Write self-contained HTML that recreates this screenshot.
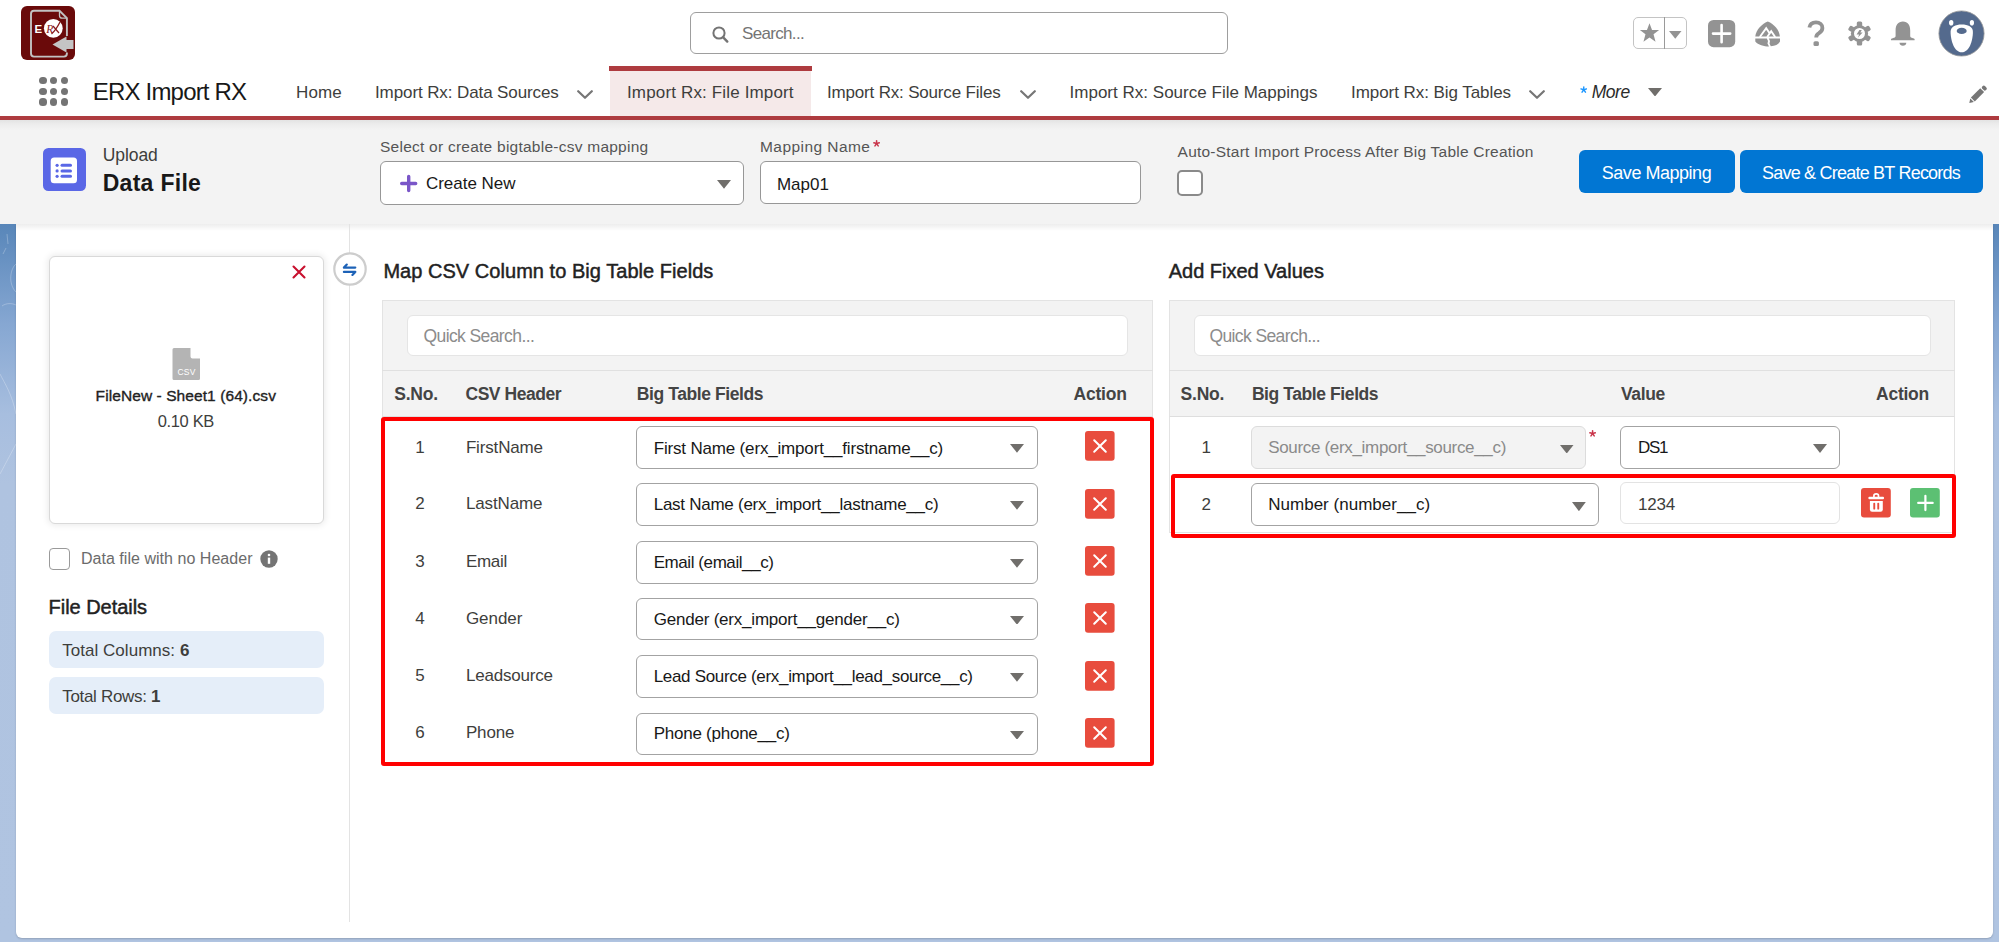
<!DOCTYPE html>
<html><head><meta charset="utf-8"><title>ERX Import RX</title>
<style>
html,body{margin:0;padding:0;}
body{width:1999px;height:942px;overflow:hidden;position:relative;background:#fff;font-family:"Liberation Sans",sans-serif;}
.a{position:absolute;}
.t{position:absolute;white-space:nowrap;line-height:1;}
.t b{font-weight:700;}
</style></head><body>
<div class="a" style="left:0px;top:224px;width:1999px;height:718px;background:linear-gradient(180deg,#5886b9 0px,#86a7d2 100px,#a7bedf 190px,#afc3e0 260px,#b0c4e1 100%);"></div>
<svg class="a" style="left:0;top:224px" width="17" height="400" viewBox="0 0 17 400"><g fill="none" stroke="rgba(255,255,255,0.25)" stroke-width="1"><path d="M7 10L8 20"/><path d="M3 30L6 24"/><path d="M16 40C10 45 8 60 16 68"/><path d="M2 82C6 79 12 79 16 81"/><path d="M0 150C5 160 12 170 16 190"/><path d="M0 250L16 220"/></g></svg>
<div class="a" style="left:16.4px;top:224px;width:1976.8999999999999px;height:714.3px;background:#fff;border-radius:0 0 6px 6px;box-shadow:0 1px 2px rgba(0,0,0,0.18);"></div>
<div class="a" style="left:0px;top:0px;width:1999px;height:116px;background:#fff;"></div>
<div class="a" style="left:0px;top:116px;width:1999px;height:4px;background:#ae3b3f;"></div>
<div class="a" style="left:0px;top:120px;width:1999px;height:104px;background:linear-gradient(180deg,#e3e3e3 0px,#ececec 4px,#f3f3f3 10px,#f3f3f3 100%);"></div>
<div class="a" style="left:16.4px;top:224px;width:1976.8999999999999px;height:7px;background:linear-gradient(180deg,rgba(0,0,0,0.07),rgba(0,0,0,0));"></div>
<svg class="a" style="left:21px;top:6px" width="54" height="54" viewBox="0 0 54 54">
<rect x="0" y="0" width="54" height="54" rx="6" fill="#6a0a0a"/>
<path d="M45.9 30V12.2L38.5 4.8H13Q10 4.8 10 7.8V47.6Q10 50.6 13 50.6H42.9Q45.9 50.6 45.9 47.6V46.5" fill="none" stroke="#c2c2c2" stroke-width="1.9"/>
<path d="M38.5 4.8V9.5Q38.5 12.2 41.2 12.2H45.9" fill="none" stroke="#c2c2c2" stroke-width="1.3"/>
<path d="M31.5 38.6L45.5 30.6V34H52.5V43H45.5V46.6Z" fill="#c4c4c4"/>
<circle cx="32.3" cy="22.3" r="9.4" fill="#fff"/>
<text x="13.6" y="26.6" font-family="Liberation Sans" font-weight="700" font-size="11.5" fill="#fff">E</text>
<text x="25.2" y="26.5" font-family="Liberation Serif" font-style="italic" font-size="11.5" fill="#8a1a1a">R</text>
<path d="M30.5 28Q35 24 39 16" fill="none" stroke="#8a1a1a" stroke-width="1.3"/>
<path d="M32 20L38 27" fill="none" stroke="#8a1a1a" stroke-width="1.2"/>
</svg>
<div class="a" style="left:689.5px;top:12px;width:538.5px;height:41.5px;border:1.5px solid #9e9e9e;border-radius:6px;box-sizing:border-box;background:#fff;"></div>
<svg class="a" style="left:711px;top:25px" width="18" height="19" viewBox="0 0 18 19"><circle cx="8" cy="8" r="5.6" fill="none" stroke="#747474" stroke-width="2"/><path d="M12.2 12.4L16.3 16.6" stroke="#747474" stroke-width="2.4" stroke-linecap="round"/></svg>
<div class="a" style="left:1633px;top:16.7px;width:54px;height:32.8px;border:1.6px solid #c4c4c4;border-radius:5px;box-sizing:border-box;"></div>
<div class="a" style="left:1664px;top:17px;width:1.2999999999999545px;height:32px;background:#9a9a9a;"></div>
<svg class="a" style="left:1639px;top:22px" width="21" height="21" viewBox="0 0 24 24"><path d="M12 1.5L14.9 9.2H23L16.6 14.1L18.9 22.5L12 17.6L5.1 22.5L7.4 14.1L1 9.2H9.1Z" fill="#939393"/></svg>
<svg class="a" style="left:1669px;top:31px" width="12.5" height="7.799999999999997" viewBox="0 0 12.5 7.799999999999997"><path d="M0 0H12.5L6.25 7.799999999999997Z" fill="#939393"/></svg>
<svg class="a" style="left:1708px;top:19.5px" width="28" height="28" viewBox="0 0 28 28"><rect x="0" y="0" width="27.2" height="27.2" rx="5.5" fill="#939393"/><path d="M13.6 5V22.2M5 13.6H22.2" stroke="#fff" stroke-width="2.6" stroke-linecap="round"/></svg>
<svg class="a" style="left:1755px;top:20.5px" width="26" height="26" viewBox="0 0 26 26">
<path d="M12.8 0.5C19 3 24.5 9 24.8 15.5H0.3C1 9 6.5 3 12.8 0.5Z" fill="#939393"/>
<path d="M0.3 17.5H11.8L13 20L12.5 22.5L14 25.5C9 25.5 3 24 0.3 20.5Z" fill="#939393"/>
<path d="M25 17.5H13.8L15 20L14.5 22.5L15.8 25.3C20 25 23.5 23.5 25 20.5Z" fill="#939393"/>
<path d="M4.8 16L11.2 7.2L14.6 12.2M12.2 16L16.2 10.2L20.2 16" fill="none" stroke="#fff" stroke-width="1.9"/>
</svg>
<svg class="a" style="left:1806px;top:19.5px" width="20" height="27" viewBox="0 0 20 27"><path d="M3.4 7.6C3.9 4 6.6 2.4 10 2.4C13.8 2.4 16.4 4.8 16.4 8C16.4 10.6 14.8 12 13 13.2C11 14.4 10.2 15.4 10.2 17.6" fill="none" stroke="#939393" stroke-width="3.8" stroke-linecap="butt"/><rect x="7.5" y="21.2" width="5.4" height="4.9" rx="1.6" fill="#939393"/></svg>
<svg class="a" style="left:1846.5px;top:20.5px" width="25" height="25" viewBox="0 0 25 25">
<g fill="#939393"><circle cx="12.5" cy="12.5" r="8.6"/>
<rect x="9.8" y="0.5" width="5.4" height="5" rx="1.5"/><rect x="9.8" y="19.5" width="5.4" height="5" rx="1.5"/>
<rect x="9.8" y="0.5" width="5.4" height="5" rx="1.5" transform="rotate(60 12.5 12.5)"/><rect x="9.8" y="0.5" width="5.4" height="5" rx="1.5" transform="rotate(120 12.5 12.5)"/>
<rect x="9.8" y="0.5" width="5.4" height="5" rx="1.5" transform="rotate(240 12.5 12.5)"/><rect x="9.8" y="0.5" width="5.4" height="5" rx="1.5" transform="rotate(300 12.5 12.5)"/></g>
<circle cx="12.5" cy="12.5" r="5.5" fill="#fff"/>
<path d="M12.4 8.9H14.8L13.3 11.5H15.6L11 16.4L12.1 13.4H9.6Z" fill="#939393"/>
</svg>
<svg class="a" style="left:1889.5px;top:20.5px" width="26" height="26" viewBox="0 0 26 26"><path d="M12.9 0.5C17.8 0.5 20.2 4.2 20.2 9.5V15C20.2 16.2 21.2 16.8 23 17.2C24.5 17.5 25 18.5 24.5 19.2H1.1C0.6 18.5 1.2 17.5 2.7 17.2C4.5 16.8 5.6 16.2 5.6 15V9.5C5.6 4.2 8 0.5 12.9 0.5Z" fill="#939393"/><path d="M9.5 21.8H16.3C16.3 23.5 14.8 24.8 12.9 24.8C11 24.8 9.5 23.5 9.5 21.8Z" fill="#939393"/></svg>
<svg class="a" style="left:1938px;top:10px" width="47" height="47" viewBox="0 0 47 47">
<circle cx="23.5" cy="23.5" r="22.6" fill="#546a8d" stroke="#9a9a9a" stroke-width="0.8"/>
<ellipse cx="13.2" cy="12.7" rx="2.2" ry="2.8" fill="#fff"/><ellipse cx="33.9" cy="12.7" rx="2.1" ry="2.8" fill="#fff"/>
<path d="M23.7 14.6C30 14.6 34.9 16.5 34.9 22C34.9 30 31.5 42.3 23.7 42.3C16 42.3 12.6 30 12.6 22C12.6 16.5 17.5 14.6 23.7 14.6Z" fill="#fff"/>
<ellipse cx="23.7" cy="20.9" rx="5" ry="3.1" fill="#546a8d"/>
</svg>
<div class="a" style="left:39.4px;top:76.7px;width:7.2px;height:7.2px;border-radius:50%;background:#747474;"></div>
<div class="a" style="left:50.199999999999996px;top:76.7px;width:7.2px;height:7.2px;border-radius:50%;background:#747474;"></div>
<div class="a" style="left:60.800000000000004px;top:76.7px;width:7.2px;height:7.2px;border-radius:50%;background:#747474;"></div>
<div class="a" style="left:39.4px;top:87.7px;width:7.2px;height:7.2px;border-radius:50%;background:#747474;"></div>
<div class="a" style="left:50.199999999999996px;top:87.7px;width:7.2px;height:7.2px;border-radius:50%;background:#747474;"></div>
<div class="a" style="left:60.800000000000004px;top:87.7px;width:7.2px;height:7.2px;border-radius:50%;background:#747474;"></div>
<div class="a" style="left:39.4px;top:98.4px;width:7.2px;height:7.2px;border-radius:50%;background:#747474;"></div>
<div class="a" style="left:50.199999999999996px;top:98.4px;width:7.2px;height:7.2px;border-radius:50%;background:#747474;"></div>
<div class="a" style="left:60.800000000000004px;top:98.4px;width:7.2px;height:7.2px;border-radius:50%;background:#747474;"></div>
<div class="a" style="left:610px;top:70px;width:201px;height:46px;background:#f5e9e9;"></div>
<div class="a" style="left:609px;top:66px;width:202.5px;height:4.5px;background:#ae3b3f;"></div>
<svg class="a" style="left:577px;top:89px" width="16" height="10" viewBox="0 0 16 10"><path d="M1.2 2.2L8.0 8.8L14.8 2.2" fill="none" stroke="#767676" stroke-width="2.2" stroke-linecap="round" stroke-linejoin="round"/></svg>
<svg class="a" style="left:1019.5px;top:89px" width="16.0" height="10" viewBox="0 0 16.0 10"><path d="M1.2 2.2L8.0 8.8L14.8 2.2" fill="none" stroke="#767676" stroke-width="2.2" stroke-linecap="round" stroke-linejoin="round"/></svg>
<svg class="a" style="left:1529px;top:89px" width="16" height="10" viewBox="0 0 16 10"><path d="M1.2 2.2L8.0 8.8L14.8 2.2" fill="none" stroke="#767676" stroke-width="2.2" stroke-linecap="round" stroke-linejoin="round"/></svg>
<svg class="a" style="left:1579.5px;top:85.5px" width="7.5" height="7.5" viewBox="0 0 8 8"><g stroke="#1b96ff" stroke-width="1.5" stroke-linecap="round"><path d="M4 0.9V4"/><path d="M4 4L1 3.1"/><path d="M4 4L7 3.1"/><path d="M4 4L2.2 6.6"/><path d="M4 4L5.8 6.6"/></g></svg>
<svg class="a" style="left:1648px;top:87.7px" width="14" height="8.5" viewBox="0 0 14 8.5"><path d="M0 0H14L7.0 8.5Z" fill="#706e6b"/></svg>
<svg class="a" style="left:1965px;top:82px" width="25" height="25" viewBox="0 0 25 25"><g fill="#767676" transform="translate(12.45 12.9) rotate(-45)"><path d="M-11.5 0L-7.6 -2.6V2.6Z"/><rect x="-6.5" y="-2.75" width="13.2" height="5.5"/><rect x="7.8" y="-2.6" width="3.8" height="5.2" rx="1.6"/></g></svg>
<svg class="a" style="left:43px;top:148px" width="43" height="43" viewBox="0 0 43 43">
<rect x="0" y="0" width="43" height="43" rx="5.5" fill="#5a67e6"/>
<rect x="7.7" y="9.4" width="26.3" height="25.9" rx="3.5" fill="#fff"/>
<g fill="#5a67e6"><circle cx="14.1" cy="17.3" r="1.6"/><circle cx="14.1" cy="22.9" r="1.6"/><circle cx="14.1" cy="28.3" r="1.6"/>
<rect x="17.5" y="15.8" width="11.5" height="3" rx="1.5"/><rect x="17.5" y="21.4" width="11.5" height="3" rx="1.5"/><rect x="17.5" y="26.8" width="11.5" height="3" rx="1.5"/></g>
</svg>
<div class="a" style="left:380px;top:161px;width:363.5px;height:43.5px;border:1.3px solid #979797;border-radius:6px;box-sizing:border-box;background:#fff;"></div>
<svg class="a" style="left:399px;top:173.5px" width="20" height="20" viewBox="0 0 20 20"><path d="M9.7 2.5V16.5M2.7 9.5H16.7" stroke="#7a56c8" stroke-width="3.4" stroke-linecap="round"/></svg>
<svg class="a" style="left:716.5px;top:180px" width="14.0" height="8.800000000000011" viewBox="0 0 14.0 8.800000000000011"><path d="M0 0H14.0L7.0 8.800000000000011Z" fill="#706e6b"/></svg>
<svg class="a" style="left:872.8px;top:140.2px" width="7.2" height="7.2" viewBox="0 0 8 8"><g stroke="#c9374c" stroke-width="1.7" stroke-linecap="round"><path d="M4 0.9V4"/><path d="M4 4L1 3.1"/><path d="M4 4L7 3.1"/><path d="M4 4L2.2 6.6"/><path d="M4 4L5.8 6.6"/></g></svg>
<div class="a" style="left:759.5px;top:161.3px;width:381.5px;height:43.19999999999999px;border:1.3px solid #979797;border-radius:6px;box-sizing:border-box;background:#fff;"></div>
<div class="a" style="left:1177px;top:170px;width:26px;height:26px;border:2px solid #8a8a8a;border-radius:5px;box-sizing:border-box;background:#fff;"></div>
<div class="a" style="left:1579px;top:150.3px;width:156px;height:42.69999999999999px;background:#0176d3;border-radius:6px;"></div>
<div class="a" style="left:1740px;top:150.3px;width:243px;height:42.69999999999999px;background:#0176d3;border-radius:6px;"></div>
<div class="a" style="left:349px;top:224px;width:1px;height:698px;background:#e3e3e3;"></div>
<div class="a" style="left:49px;top:256px;width:275px;height:268px;border:1px solid #d9d9d9;border-radius:6px;box-sizing:border-box;background:#fff;box-shadow:0 0 7px 1px rgba(0,0,0,0.09);"></div>
<svg class="a" style="left:291px;top:264.2px" width="16" height="16" viewBox="0 0 16 16"><path d="M2.5 2.5L13.5 13.5M13.5 2.5L2.5 13.5" stroke="#c8102e" stroke-width="2.1" stroke-linecap="round"/></svg>
<svg class="a" style="left:332px;top:251.5px" width="36" height="36" viewBox="0 0 36 36">
<circle cx="18" cy="17" r="15.7" fill="#fff" stroke="#cdcdcd" stroke-width="2.2"/>
<path d="M11.9 15.6H23.3M11.9 15.6L14.8 12.6" fill="none" stroke="#1d62b7" stroke-width="2.2" stroke-linecap="round" stroke-linejoin="round"/>
<path d="M11.9 19.9H23.3M23.3 19.9L20.4 22.9" fill="none" stroke="#1d62b7" stroke-width="2.2" stroke-linecap="round" stroke-linejoin="round"/>
</svg>
<svg class="a" style="left:171.5px;top:348px" width="29" height="33" viewBox="0 0 29 33">
<path d="M2 0H18.5V8.5Q18.5 10.5 20.5 10.5H28V30.5Q28 32 26.5 32H2Q0.5 32 0.5 30.5V1.5Q0.5 0 2 0Z" fill="#b4b4b4"/>
<text x="14.5" y="27" text-anchor="middle" font-family="Liberation Sans" font-size="8.5" fill="#fff" letter-spacing="0.2">CSV</text>
</svg>
<div class="a" style="left:48.5px;top:548px;width:21.5px;height:21.5px;border:1px solid #9a9a9a;border-radius:4px;box-sizing:border-box;background:#fff;"></div>
<svg class="a" style="left:259.5px;top:549.5px" width="18" height="18" viewBox="0 0 18 18"><circle cx="9" cy="9" r="8.7" fill="#747474"/><rect x="7.8" y="7.6" width="2.4" height="6.2" fill="#fff"/><circle cx="9" cy="5" r="1.3" fill="#fff"/></svg>
<div class="a" style="left:48.5px;top:631.2px;width:275.5px;height:37.0px;background:#e5eef9;border-radius:7px;"></div>
<div class="a" style="left:48.5px;top:677px;width:275.5px;height:36.700000000000045px;background:#e5eef9;border-radius:7px;"></div>
<div class="a" style="left:382px;top:300px;width:770.8px;height:462.5px;background:#fff;border:1px solid #e3e3e3;box-sizing:border-box;"></div>
<div class="a" style="left:382px;top:300px;width:770.8px;height:116.60000000000002px;background:#f3f3f3;border:1px solid #e3e3e3;border-bottom:1px solid #dedede;box-sizing:border-box;"></div>
<div class="a" style="left:382px;top:370px;width:770.8px;height:1px;background:#e0e0e0;"></div>
<div class="a" style="left:406.7px;top:314.6px;width:721.8px;height:41.599999999999966px;background:#fff;border:1px solid #e5e5e5;border-radius:6px;box-sizing:border-box;"></div>
<div class="a" style="left:1168.5px;top:300px;width:786.5px;height:232.5px;background:#fff;border:1px solid #e3e3e3;box-sizing:border-box;"></div>
<div class="a" style="left:1168.5px;top:300px;width:786.5px;height:116.60000000000002px;background:#f3f3f3;border:1px solid #e3e3e3;border-bottom:1px solid #dedede;box-sizing:border-box;"></div>
<div class="a" style="left:1168.5px;top:370px;width:786.5px;height:1px;background:#e0e0e0;"></div>
<div class="a" style="left:1193.5px;top:314.6px;width:737.0px;height:41.599999999999966px;background:#fff;border:1px solid #e5e5e5;border-radius:6px;box-sizing:border-box;"></div>
<div class="a" style="left:636px;top:426.1px;width:402px;height:42.60000000000002px;border:1.3px solid #a3a3a3;border-radius:6px;box-sizing:border-box;background:#fff;"></div>
<svg class="a" style="left:1010.3px;top:444.20000000000005px" width="14.0" height="8.699999999999989" viewBox="0 0 14.0 8.699999999999989"><path d="M0 0H14.0L7.0 8.699999999999989Z" fill="#706e6b"/></svg>
<svg class="a" style="left:1085.2px;top:431.3px" width="30" height="30" viewBox="0 0 30 30"><rect width="29.6" height="29.7" rx="3" fill="#e84c3d"/><path d="M9.2 9.2L20.8 20.8M20.8 9.2L9.2 20.8" stroke="#fff" stroke-width="2" stroke-linecap="round"/></svg>
<div class="a" style="left:636px;top:483.3px;width:402px;height:42.599999999999966px;border:1.3px solid #a3a3a3;border-radius:6px;box-sizing:border-box;background:#fff;"></div>
<svg class="a" style="left:1010.3px;top:501.40000000000003px" width="14.0" height="8.699999999999989" viewBox="0 0 14.0 8.699999999999989"><path d="M0 0H14.0L7.0 8.699999999999989Z" fill="#706e6b"/></svg>
<svg class="a" style="left:1085.2px;top:488.5px" width="30" height="30" viewBox="0 0 30 30"><rect width="29.6" height="29.7" rx="3" fill="#e84c3d"/><path d="M9.2 9.2L20.8 20.8M20.8 9.2L9.2 20.8" stroke="#fff" stroke-width="2" stroke-linecap="round"/></svg>
<div class="a" style="left:636px;top:541.2px;width:402px;height:42.60000000000002px;border:1.3px solid #a3a3a3;border-radius:6px;box-sizing:border-box;background:#fff;"></div>
<svg class="a" style="left:1010.3px;top:559.3000000000001px" width="14.0" height="8.699999999999932" viewBox="0 0 14.0 8.699999999999932"><path d="M0 0H14.0L7.0 8.699999999999932Z" fill="#706e6b"/></svg>
<svg class="a" style="left:1085.2px;top:546.4000000000001px" width="30" height="30" viewBox="0 0 30 30"><rect width="29.6" height="29.7" rx="3" fill="#e84c3d"/><path d="M9.2 9.2L20.8 20.8M20.8 9.2L9.2 20.8" stroke="#fff" stroke-width="2" stroke-linecap="round"/></svg>
<div class="a" style="left:636px;top:597.7px;width:402px;height:42.60000000000002px;border:1.3px solid #a3a3a3;border-radius:6px;box-sizing:border-box;background:#fff;"></div>
<svg class="a" style="left:1010.3px;top:615.8000000000001px" width="14.0" height="8.699999999999932" viewBox="0 0 14.0 8.699999999999932"><path d="M0 0H14.0L7.0 8.699999999999932Z" fill="#706e6b"/></svg>
<svg class="a" style="left:1085.2px;top:602.9000000000001px" width="30" height="30" viewBox="0 0 30 30"><rect width="29.6" height="29.7" rx="3" fill="#e84c3d"/><path d="M9.2 9.2L20.8 20.8M20.8 9.2L9.2 20.8" stroke="#fff" stroke-width="2" stroke-linecap="round"/></svg>
<div class="a" style="left:636px;top:655.3px;width:402px;height:42.60000000000002px;border:1.3px solid #a3a3a3;border-radius:6px;box-sizing:border-box;background:#fff;"></div>
<svg class="a" style="left:1010.3px;top:673.4px" width="14.0" height="8.699999999999932" viewBox="0 0 14.0 8.699999999999932"><path d="M0 0H14.0L7.0 8.699999999999932Z" fill="#706e6b"/></svg>
<svg class="a" style="left:1085.2px;top:660.5px" width="30" height="30" viewBox="0 0 30 30"><rect width="29.6" height="29.7" rx="3" fill="#e84c3d"/><path d="M9.2 9.2L20.8 20.8M20.8 9.2L9.2 20.8" stroke="#fff" stroke-width="2" stroke-linecap="round"/></svg>
<div class="a" style="left:636px;top:712.6px;width:402px;height:42.60000000000002px;border:1.3px solid #a3a3a3;border-radius:6px;box-sizing:border-box;background:#fff;"></div>
<svg class="a" style="left:1010.3px;top:730.7px" width="14.0" height="8.699999999999932" viewBox="0 0 14.0 8.699999999999932"><path d="M0 0H14.0L7.0 8.699999999999932Z" fill="#706e6b"/></svg>
<svg class="a" style="left:1085.2px;top:717.8000000000001px" width="30" height="30" viewBox="0 0 30 30"><rect width="29.6" height="29.7" rx="3" fill="#e84c3d"/><path d="M9.2 9.2L20.8 20.8M20.8 9.2L9.2 20.8" stroke="#fff" stroke-width="2" stroke-linecap="round"/></svg>
<div class="a" style="left:1251.4px;top:426px;width:334.5999999999999px;height:42.80000000000001px;border:1px solid #dcdcdc;border-radius:6px;box-sizing:border-box;background:#f3f3f3;"></div>
<svg class="a" style="left:1560px;top:444.5px" width="13.5" height="8.5" viewBox="0 0 13.5 8.5"><path d="M0 0H13.5L6.75 8.5Z" fill="#706e6b"/></svg>
<svg class="a" style="left:1589.2px;top:429.6px" width="7.2" height="7.2" viewBox="0 0 8 8"><g stroke="#c9374c" stroke-width="1.7" stroke-linecap="round"><path d="M4 0.9V4"/><path d="M4 4L1 3.1"/><path d="M4 4L7 3.1"/><path d="M4 4L2.2 6.6"/><path d="M4 4L5.8 6.6"/></g></svg>
<div class="a" style="left:1620.2px;top:426px;width:220.29999999999995px;height:42.80000000000001px;border:1.3px solid #a3a3a3;border-radius:6px;box-sizing:border-box;background:#fff;"></div>
<svg class="a" style="left:1813px;top:444.3px" width="14" height="9.0" viewBox="0 0 14 9.0"><path d="M0 0H14L7.0 9.0Z" fill="#706e6b"/></svg>
<div class="a" style="left:1251.4px;top:483px;width:347.5999999999999px;height:43px;border:1.3px solid #a3a3a3;border-radius:6px;box-sizing:border-box;background:#fff;"></div>
<svg class="a" style="left:1572px;top:501.6px" width="13.799999999999955" height="9.199999999999989" viewBox="0 0 13.799999999999955 9.199999999999989"><path d="M0 0H13.799999999999955L6.899999999999977 9.199999999999989Z" fill="#706e6b"/></svg>
<div class="a" style="left:1620.2px;top:481.6px;width:220.29999999999995px;height:42.89999999999998px;border:1px solid #e3e3e3;border-radius:6px;box-sizing:border-box;background:#fff;"></div>
<svg class="a" style="left:1860.7px;top:488px" width="30" height="30" viewBox="0 0 30 30"><rect width="29.8" height="29.5" rx="3" fill="#e84c3d"/>
<path d="M12.9 9.2V7.7Q12.9 5.9 15.2 5.9Q17.5 5.9 17.5 7.7V9.2" fill="none" stroke="#fff" stroke-width="1.7"/>
<rect x="7.4" y="8.8" width="15.6" height="2.5" rx="1" fill="#fff"/>
<path d="M8.9 13H21.8V21.6Q21.8 23.8 19.6 23.8H11.1Q8.9 23.8 8.9 21.6Z" fill="#fff"/>
<rect x="12.3" y="14.8" width="1.9" height="6.8" rx="0.9" fill="#e84c3d"/><rect x="16.3" y="14.8" width="1.9" height="6.8" rx="0.9" fill="#e84c3d"/>
</svg>
<svg class="a" style="left:1909.8px;top:488px" width="30" height="30" viewBox="0 0 30 30"><rect width="29.8" height="29.5" rx="3" fill="#5cc073"/><path d="M15.4 7.8V22.1M8.2 14.9H22.7" stroke="#fff" stroke-width="2.2" stroke-linecap="round"/></svg>
<div class="a" style="left:381px;top:417px;width:772.5px;height:349px;border:4px solid #ff0000;border-radius:3px;box-sizing:border-box;"></div>
<div class="a" style="left:1171px;top:474px;width:784.5px;height:63.5px;border:4px solid #ff0000;border-radius:3px;box-sizing:border-box;"></div>
<div class="t" style="left:742.0px;top:25.11px;font-size:17px;font-weight:400;color:#747474;letter-spacing:-0.672px;">Search...</div>
<div class="t" style="left:92.8px;top:80.18px;font-size:24px;font-weight:400;color:#181818;letter-spacing:-0.811px;">ERX Import RX</div>
<div class="t" style="left:296.0px;top:83.61px;font-size:17px;font-weight:400;color:#3e3e3c;letter-spacing:0.160px;">Home</div>
<div class="t" style="left:375.0px;top:83.61px;font-size:17px;font-weight:400;color:#3e3e3c;letter-spacing:-0.103px;">Import Rx: Data Sources</div>
<div class="t" style="left:627.0px;top:83.61px;font-size:17px;font-weight:400;color:#3e3e3c;letter-spacing:0.151px;">Import Rx: File Import</div>
<div class="t" style="left:827.0px;top:83.61px;font-size:17px;font-weight:400;color:#3e3e3c;letter-spacing:-0.179px;">Import Rx: Source Files</div>
<div class="t" style="left:1069.5px;top:83.61px;font-size:17px;font-weight:400;color:#3e3e3c;letter-spacing:0.015px;">Import Rx: Source File Mappings</div>
<div class="t" style="left:1351.0px;top:83.61px;font-size:17px;font-weight:400;color:#3e3e3c;letter-spacing:-0.060px;">Import Rx: Big Tables</div>
<div class="t" style="left:1591.8px;top:83.69px;font-size:17.5px;font-weight:400;color:#2b2b2b;letter-spacing:-0.519px;font-style:italic;">More</div>
<div class="t" style="left:102.7px;top:146.59px;font-size:17.5px;font-weight:400;color:#3e3e3c;letter-spacing:-0.061px;">Upload</div>
<div class="t" style="left:102.7px;top:172.03px;font-size:23px;font-weight:700;color:#181818;letter-spacing:0.292px;">Data File</div>
<div class="t" style="left:380.0px;top:138.88px;font-size:15.5px;font-weight:400;color:#555555;letter-spacing:0.245px;">Select or create bigtable-csv mapping</div>
<div class="t" style="left:760.0px;top:139.38px;font-size:15.5px;font-weight:400;color:#555555;letter-spacing:0.441px;">Mapping Name</div>
<div class="t" style="left:426.0px;top:175.01px;font-size:17px;font-weight:400;color:#181818;letter-spacing:-0.037px;">Create New</div>
<div class="t" style="left:777.0px;top:175.91px;font-size:17px;font-weight:400;color:#181818;letter-spacing:-0.037px;">Map01</div>
<div class="t" style="left:1177.6px;top:143.88px;font-size:15.5px;font-weight:400;color:#555555;letter-spacing:0.216px;">Auto-Start Import Process After Big Table Creation</div>
<div class="t" style="left:1601.8px;top:163.76px;font-size:18px;font-weight:400;color:#ffffff;letter-spacing:-0.473px;">Save Mapping</div>
<div class="t" style="left:1762.0px;top:163.76px;font-size:18px;font-weight:400;color:#ffffff;letter-spacing:-0.782px;">Save &amp; Create BT Records</div>
<div class="t" style="left:95.6px;top:387.88px;font-size:15.5px;font-weight:400;color:#222222;letter-spacing:0.084px;-webkit-text-stroke:0.35px #222;">FileNew - Sheet1 (64).csv</div>
<div class="t" style="left:157.7px;top:413.03px;font-size:16.5px;font-weight:400;color:#3e3e3c;letter-spacing:-0.346px;">0.10 KB</div>
<div class="t" style="left:80.9px;top:550.66px;font-size:16px;font-weight:400;color:#6b6b6b;letter-spacing:0.035px;">Data file with no Header</div>
<div class="t" style="left:48.6px;top:597.47px;font-size:20px;font-weight:400;color:#222222;letter-spacing:-0.043px;-webkit-text-stroke:0.45px #222;">File Details</div>
<div class="t" style="left:62.2px;top:641.61px;font-size:17px;font-weight:400;color:#3e3e3c;letter-spacing:0.035px;">Total Columns: <b>6</b></div>
<div class="t" style="left:62.2px;top:687.61px;font-size:17px;font-weight:400;color:#3e3e3c;letter-spacing:-0.312px;">Total Rows: <b>1</b></div>
<div class="t" style="left:383.4px;top:261.37px;font-size:20px;font-weight:400;color:#222222;letter-spacing:0.039px;-webkit-text-stroke:0.45px #222;">Map CSV Column to Big Table Fields</div>
<div class="t" style="left:423.5px;top:328.19px;font-size:17.5px;font-weight:400;color:#8c8c8c;letter-spacing:-0.596px;">Quick Search...</div>
<div class="t" style="left:394.3px;top:386.19px;font-size:17.5px;font-weight:700;color:#444444;letter-spacing:-0.247px;">S.No.</div>
<div class="t" style="left:465.5px;top:386.19px;font-size:17.5px;font-weight:700;color:#444444;letter-spacing:-0.469px;">CSV Header</div>
<div class="t" style="left:636.8px;top:386.19px;font-size:17.5px;font-weight:700;color:#444444;letter-spacing:-0.412px;">Big Table Fields</div>
<div class="t" style="left:1073.6px;top:386.19px;font-size:17.5px;font-weight:700;color:#444444;letter-spacing:-0.242px;">Action</div>
<div class="t" style="left:1168.7px;top:261.07px;font-size:20px;font-weight:400;color:#222222;letter-spacing:-0.005px;-webkit-text-stroke:0.45px #222;">Add Fixed Values</div>
<div class="t" style="left:1209.4px;top:328.19px;font-size:17.5px;font-weight:400;color:#8c8c8c;letter-spacing:-0.596px;">Quick Search...</div>
<div class="t" style="left:1180.6px;top:386.19px;font-size:17.5px;font-weight:700;color:#444444;letter-spacing:-0.247px;">S.No.</div>
<div class="t" style="left:1251.9px;top:386.19px;font-size:17.5px;font-weight:700;color:#444444;letter-spacing:-0.412px;">Big Table Fields</div>
<div class="t" style="left:1621.0px;top:386.19px;font-size:17.5px;font-weight:700;color:#444444;letter-spacing:-0.347px;">Value</div>
<div class="t" style="left:1876.0px;top:386.19px;font-size:17.5px;font-weight:700;color:#444444;letter-spacing:-0.242px;">Action</div>
<div class="t" style="left:1201.6px;top:438.61px;font-size:17px;font-weight:400;color:#3e3e3c;">1</div>
<div class="t" style="left:1268.2px;top:439.41px;font-size:17px;font-weight:400;color:#8a8a8a;letter-spacing:-0.325px;">Source (erx_import__source__c)</div>
<div class="t" style="left:1638.0px;top:439.41px;font-size:17px;font-weight:400;color:#181818;letter-spacing:-1.359px;">DS1</div>
<div class="t" style="left:1201.6px;top:495.61px;font-size:17px;font-weight:400;color:#3e3e3c;">2</div>
<div class="t" style="left:1268.2px;top:496.41px;font-size:17px;font-weight:400;color:#181818;letter-spacing:0.024px;">Number (number__c)</div>
<div class="t" style="left:1638.0px;top:495.61px;font-size:17px;font-weight:400;color:#3e3e3c;letter-spacing:-0.207px;">1234</div>
<div class="t" style="left:415.3px;top:438.51px;font-size:17px;font-weight:400;color:#3e3e3c;">1</div>
<div class="t" style="left:465.9px;top:438.51px;font-size:17px;font-weight:400;color:#3e3e3c;letter-spacing:-0.156px;">FirstName</div>
<div class="t" style="left:653.7px;top:439.51px;font-size:17px;font-weight:400;color:#181818;letter-spacing:-0.173px;">First Name (erx_import__firstname__c)</div>
<div class="t" style="left:415.3px;top:495.21px;font-size:17px;font-weight:400;color:#3e3e3c;">2</div>
<div class="t" style="left:465.9px;top:495.21px;font-size:17px;font-weight:400;color:#3e3e3c;letter-spacing:-0.123px;">LastName</div>
<div class="t" style="left:653.7px;top:496.21px;font-size:17px;font-weight:400;color:#181818;letter-spacing:-0.262px;">Last Name (erx_import__lastname__c)</div>
<div class="t" style="left:415.3px;top:552.61px;font-size:17px;font-weight:400;color:#3e3e3c;">3</div>
<div class="t" style="left:465.9px;top:552.61px;font-size:17px;font-weight:400;color:#3e3e3c;letter-spacing:-0.303px;">Email</div>
<div class="t" style="left:653.7px;top:553.61px;font-size:17px;font-weight:400;color:#181818;letter-spacing:-0.425px;">Email (email__c)</div>
<div class="t" style="left:415.3px;top:609.91px;font-size:17px;font-weight:400;color:#3e3e3c;">4</div>
<div class="t" style="left:465.9px;top:609.91px;font-size:17px;font-weight:400;color:#3e3e3c;letter-spacing:-0.034px;">Gender</div>
<div class="t" style="left:653.7px;top:610.91px;font-size:17px;font-weight:400;color:#181818;letter-spacing:-0.210px;">Gender (erx_import__gender__c)</div>
<div class="t" style="left:415.3px;top:667.31px;font-size:17px;font-weight:400;color:#3e3e3c;">5</div>
<div class="t" style="left:465.9px;top:667.31px;font-size:17px;font-weight:400;color:#3e3e3c;letter-spacing:-0.184px;">Leadsource</div>
<div class="t" style="left:653.7px;top:668.31px;font-size:17px;font-weight:400;color:#181818;letter-spacing:-0.318px;">Lead Source (erx_import__lead_source__c)</div>
<div class="t" style="left:415.3px;top:723.61px;font-size:17px;font-weight:400;color:#3e3e3c;">6</div>
<div class="t" style="left:465.9px;top:723.61px;font-size:17px;font-weight:400;color:#3e3e3c;letter-spacing:-0.134px;">Phone</div>
<div class="t" style="left:653.7px;top:724.61px;font-size:17px;font-weight:400;color:#181818;letter-spacing:-0.243px;">Phone (phone__c)</div>
</body></html>
